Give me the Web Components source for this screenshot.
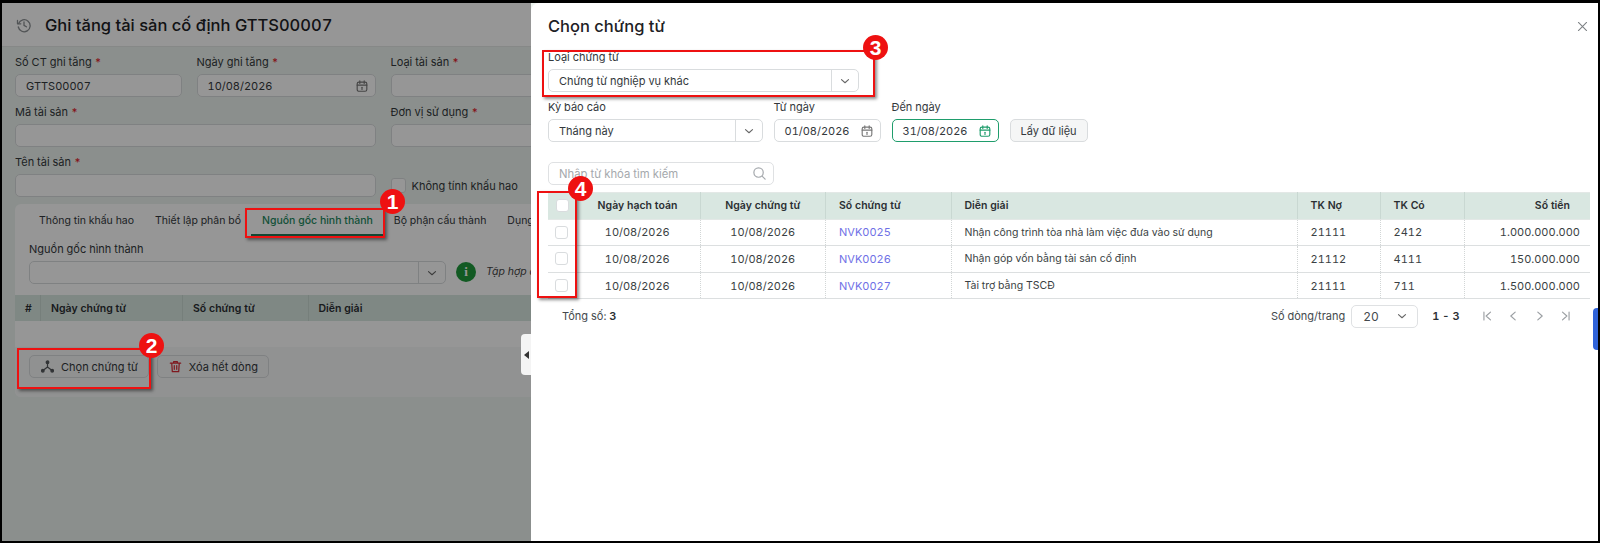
<!DOCTYPE html>
<html lang="vi">
<head>
<meta charset="utf-8">
<title>Ghi tăng tài sản cố định</title>
<style>
  html, body { margin: 0; height: 100%; background: #000; overflow: hidden; }
  body { font: 11px Inter, "Noto Sans", sans-serif; font-variant-numeric: tabular-nums; color: #2b2f33; }
</style>
</head>
<body>
<app-frame>
  <asset-panel></asset-panel>
  <voucher-modal></voucher-modal>
  <mark-box style="left:243px;top:205px;width:136px;height:26px"></mark-box>
  <mark-box style="left:15px;top:345px;width:130px;height:37px"></mark-box>
  <mark-box style="left:540px;top:47px;width:329px;height:43px"></mark-box>
  <mark-box style="left:535px;top:188px;width:36px;height:103px"></mark-box>
  <step-badge style="left:378px;top:186px">1</step-badge>
  <step-badge style="left:137px;top:330px">2</step-badge>
  <step-badge style="left:861px;top:32px">3</step-badge>
  <step-badge style="left:566px;top:173px">4</step-badge>
</app-frame>

<script>
// Shared icons, all drawn on a 16 unit grid.
const icons = {
  calendar: '<rect x="2.5" y="3.5" width="11" height="10.5" rx="2"/><path d="M2.5 7h11M5.5 2v3M10.5 2v3"/><path d="M8 9.5v2.5"/>',
  chevron: '<path d="M4 6.5 8 10l4-3.5"/>',
  search: '<circle cx="7" cy="7" r="5"/><path d="m11 11 3 3"/>',
  close: '<path d="m3 3 10 10M13 3 3 13"/>',
  trash: '<path d="M2.5 4.5h11M6 4.5V2.8h4v1.7M4 4.5l.6 9h6.8l.6-9M6.7 7v4M9.3 7v4"/>',
  nodes: '<circle cx="8" cy="3.5" r="1.4" fill="currentColor"/><circle cx="3" cy="12.5" r="1.4" fill="currentColor"/><circle cx="13" cy="12.5" r="1.4" fill="currentColor"/><path d="M8 4v4.5L3.5 12M8 8.5l4.5 3.5"/>',
  history: '<path d="M2.6 6.5A6 6 0 1 1 2.3 10"/><path d="M1.5 3.5v3.3h3.3"/><path d="M8 4.8v3.6l2.4 1.4"/>',
  first: '<path d="M4.5 3.5v9M12 3.5 7 8l5 4.5"/>',
  prev: '<path d="M10.5 3.5 5.5 8l5 4.5"/>',
  next: '<path d="M5.5 3.5 10.5 8l-5 4.5"/>',
  last: '<path d="M11.5 3.5v9M4 3.5 9 8l-5 4.5"/>'
}

/**
 * Returns the svg markup of a named icon.
 */
const icon = (name, size = 14, color = 'currentColor') =>
  `<svg width="${size}" height="${size}" viewBox="0 0 16 16" fill="none" stroke="${color}" stroke-width="1.3" stroke-linecap="round" stroke-linejoin="round" style="color:${color};flex:none;display:block">${icons[name]}</svg>`

customElements.define('app-frame',
  /**
   * The black outline of the screenshot, everything lies inside it.
   */
  class extends HTMLElement {
    constructor () {
      super()
      this.attachShadow({ mode: 'open' }).innerHTML = `
        <style>
          :host { display: block; position: absolute; inset: 3px 2px 2px 2px; overflow: hidden; background: #edf4f0; }
        </style>
        <slot></slot>
      `
    }
  }
)

customElements.define('mark-box',
  /**
   * A red rectangle drawn over the screenshot.
   */
  class extends HTMLElement {
    constructor () {
      super()
      this.attachShadow({ mode: 'open' }).innerHTML = `
        <style>
          :host { display: block; position: absolute; z-index: 5; border: 2px solid #ee1111; box-shadow: 2px 2px 3px rgba(0,0,0,.45); }
        </style>
      `
    }
  }
)

customElements.define('step-badge',
  /**
   * The numbered red circle next to a mark-box.
   */
  class extends HTMLElement {
    constructor () {
      super()
      this.attachShadow({ mode: 'open' }).innerHTML = `
        <style>
          :host { position: absolute; z-index: 6; display: flex; align-items: center; justify-content: center; width: 25px; height: 25px; border-radius: 50%; background: #ee1111; color: #fff; font: bold 21px "Liberation Sans", sans-serif; }
        </style>
        <slot></slot>
      `
    }
  }
)

customElements.define('form-field',
  /**
   * A label with a text, date or select control under it.
   */
  class extends HTMLElement {
    constructor () {
      super()
      const label = this.getAttribute('label')
      const required = this.hasAttribute('required') ? ' <b>*</b>' : ''
      const kind = this.getAttribute('kind') || 'text'
      const active = this.hasAttribute('active')
      const value = this.getAttribute('value') || ''
      let trail = ''
      if (kind === 'date') trail = `<i class="cal">${icon('calendar', 14, active ? '#1f9d6c' : '#777')}</i>`
      if (kind === 'select') trail = `<i class="sel">${icon('chevron', 14, '#666')}</i>`
      this.attachShadow({ mode: 'open' }).innerHTML = `
        <style>
          :host { display: block; min-width: 0; }
          label { display: block; height: 16px; line-height: 16px; margin-bottom: 4px; white-space: nowrap; color: #33383c; }
          b { color: #e0202c; font-weight: 500; }
          .box { display: flex; align-items: center; height: 23px; box-sizing: border-box; background: #fff; border: 1px solid ${active ? '#1f9d6c' : '#d9dcde'}; border-radius: 5px; }
          span { flex: 1; min-width: 0; padding-left: 10px; white-space: nowrap; overflow: hidden; color: #33383c; }
          i { display: flex; align-items: center; justify-content: center; height: 100%; }
          .cal { padding-right: 6px; }
          .sel { width: 26px; border-left: 1px solid #d9dcde; }
        </style>
        ${label ? `<label>${label}${required}</label>` : ''}
        <div class="box"><span>${value}</span>${trail}</div>
      `
    }
  }
)

customElements.define('plain-button',
  /**
   * A light grey outlined button, the icon goes in the icon slot.
   */
  class extends HTMLElement {
    constructor () {
      super()
      this.attachShadow({ mode: 'open' }).innerHTML = `
        <style>
          :host { display: inline-flex; align-items: center; gap: 6px; height: 23px; box-sizing: border-box; padding: 0 10px; background: #f5f6f6; border: 1px solid #d9dcde; border-radius: 5px; color: #33383c; white-space: nowrap; }
        </style>
        <slot name="icon"></slot><slot></slot>
      `
    }
  }
)

customElements.define('asset-panel',
  /**
   * The dimmed form behind the modal.
   */
  class extends HTMLElement {
    constructor () {
      super()
      this.attachShadow({ mode: 'open' }).innerHTML = `
        <style>
          :host { display: block; position: relative; width: 529px; height: 100%; overflow: hidden; }
          .dim { position: absolute; inset: 0; background: rgba(0,0,0,.41); z-index: 3; }
          header { display: flex; align-items: center; height: 44px; box-sizing: border-box; padding: 1px 0 0 14px; gap: 13px; background: #fff; border-bottom: 1px solid #e4e8e6; color: #777; }
          h1 { margin: 0; font-size: 16.5px; line-height: 24px; font-weight: 500; color: #1d2125; white-space: nowrap; }
          .form { display: grid; grid-template-columns: 167px 179.5px 175px; column-gap: 14.5px; row-gap: 7px; padding: 7px 0 0 13px; width: 600px; }
          .wide { grid-column: span 2; }
          .check { display: flex; align-items: center; gap: 6px; align-self: end; height: 23px; white-space: nowrap; color: #33383c; }
          .tick { width: 13px; height: 13px; border: 1px solid #d9dcde; border-radius: 3px; background: #fff; }
          .card { margin: 7px 0 0 13px; width: 600px; background: #fff; border-radius: 6px; overflow: hidden; }
          nav { display: flex; height: 32px; padding-left: 13.5px; font-size: 10.5px; }
          nav a { display: flex; align-items: center; padding: 0 10.5px; white-space: nowrap; color: #33383c; }
          nav a.on { color: #1f8a5f; font-weight: 500; box-shadow: inset 0 -2px 0 #1f7a55; }
          .source { padding: 5px 0 11px 14px; display: flex; align-items: flex-end; gap: 10px; }
          .source form-field { width: 417px; }
          .info { width: 20px; height: 20px; border-radius: 50%; background: #1f9a3c; color: #fff; display: flex; align-items: center; justify-content: center; font: bold 13px "Liberation Serif", serif; margin-bottom: 2px; }
          em { color: #444; font-size: 10.5px; white-space: nowrap; margin-bottom: 6px; }
          .head { display: grid; grid-template-columns: 26px 142px 125.5px 1fr; height: 26px; background: #d9e7e1; font-weight: 600; font-size: 10.5px; align-items: center; color: #2b2f33; }
          .head div { height: 100%; display: flex; align-items: center; box-sizing: border-box; padding-left: 10px; border-right: 1px solid #c9d8d2; }
          .empty { height: 26px; }
          .foot { display: flex; gap: 8px; padding: 8px 14px 19px; background: #f7f8f8; }
        </style>
        <header>${icon('history', 16, '#8b8f92')}<h1>Ghi tăng tài sản cố định GTTS00007</h1></header>
        <div class="form">
          <form-field label="Số CT ghi tăng" required value="GTTS00007"></form-field>
          <form-field label="Ngày ghi tăng" required kind="date" value="10/08/2026"></form-field>
          <form-field label="Loại tài sản" required></form-field>
          <form-field class="wide" label="Mã tài sản" required></form-field>
          <form-field label="Đơn vị sử dụng" required></form-field>
          <form-field class="wide" label="Tên tài sản" required></form-field>
          <div class="check"><div class="tick"></div>Không tính khấu hao</div>
        </div>
        <div class="card">
          <nav>
            <a>Thông tin khấu hao</a><a>Thiết lập phân bổ</a><a class="on">Nguồn gốc hình thành</a><a>Bộ phận cấu thành</a><a>Dụng cụ</a>
          </nav>
          <div class="source">
            <form-field label="Nguồn gốc hình thành" kind="select"></form-field>
            <div class="info">i</div>
            <em>Tập hợp chứng từ</em>
          </div>
          <div class="head"><div>#</div><div>Ngày chứng từ</div><div>Số chứng từ</div><div>Diễn giải</div></div>
          <div class="empty"></div>
          <div class="foot">
            <plain-button><span slot="icon">${icon('nodes', 15, '#55595c')}</span>Chọn chứng từ</plain-button>
            <plain-button><span slot="icon">${icon('trash', 15, '#d92a35')}</span>Xóa hết dòng</plain-button>
          </div>
        </div>
        <div class="dim"></div>
      `
    }
  }
)

customElements.define('voucher-table',
  /**
   * The table of vouchers, with its rows built from a list.
   */
  class extends HTMLElement {
    constructor () {
      super()
      const rows = [
        ['10/08/2026', '10/08/2026', 'NVK0025', 'Nhận công trình tòa nhà làm việc đưa vào sử dụng', '21111', '2412', '1.000.000.000'],
        ['10/08/2026', '10/08/2026', 'NVK0026', 'Nhận góp vốn bằng tài sản cố định', '21112', '4111', '150.000.000'],
        ['10/08/2026', '10/08/2026', 'NVK0027', 'Tài trợ bằng TSCĐ', '21111', '711', '1.500.000.000']
      ]
      const body = rows.map(r => `
        <tr>
          <td class="c"><u></u></td>
          <td class="m">${r[0]}</td><td class="m">${r[1]}</td>
          <td class="n"><a>${r[2]}</a></td><td>${r[3]}</td><td class="n">${r[4]}</td><td class="n">${r[5]}</td>
          <td class="r n">${r[6]}</td>
        </tr>`).join('')
      this.attachShadow({ mode: 'open' }).innerHTML = `
        <style>
          :host { display: block; }
          table { border-collapse: collapse; table-layout: fixed; width: 1042px; font-size: 10.5px; }
          th, td { height: 26.6px; padding: 0 13px; box-sizing: border-box; text-align: left; white-space: nowrap; }
          th { background: #d9e7e1; font-weight: 600; color: #2b2f33; border-right: 1px solid #c9d8d2; border-top: 1px solid #e3e8e6; border-bottom: 1px solid #e3e8e6; }
          th:last-child, td:last-child { border-right: 0; }
          td { color: #3a3f43; border-bottom: 1px solid #dcdfe0; border-right: 1px dotted #d2d6d6; }
          .m, .n { font-size: 11px; }
          .m { text-align: center; }
          th.m { font-size: 10.5px; }
          th.r { text-align: right; padding-right: 20px; }
          td.r { text-align: right; padding-right: 10px; }
          .c { padding: 0 0 0 7px; }
          td.c { border-right: 0; }
          u { display: block; width: 13px; height: 13px; box-sizing: border-box; border: 1px solid #d9dcde; border-radius: 3px; background: #fff; }
          th u { margin-left: 1px; }
          a { color: #6f70e6; }
        </style>
        <table>
          <colgroup>
            <col style="width:27px"><col style="width:125px"><col style="width:125.5px"><col style="width:125.5px">
            <col style="width:346px"><col style="width:83px"><col style="width:84px"><col style="width:126px">
          </colgroup>
          <thead><tr>
            <th class="c"><u></u></th><th class="m">Ngày hạch toán</th><th class="m">Ngày chứng từ</th><th>Số chứng từ</th>
            <th>Diễn giải</th><th>TK Nợ</th><th>TK Có</th><th class="r">Số tiền</th>
          </tr></thead>
          <tbody>${body}</tbody>
        </table>
      `
    }
  }
)

customElements.define('voucher-modal',
  /**
   * The white drawer that lies over the right side of the form.
   */
  class extends HTMLElement {
    constructor () {
      super()
      this.attachShadow({ mode: 'open' }).innerHTML = `
        <style>
          :host { display: block; position: absolute; z-index: 4; top: 0; bottom: 0; left: 529px; right: 0; background: #fff; border-top-left-radius: 8px; box-sizing: border-box; padding: 0 7px 0 17px; }
          .handle { position: absolute; left: -10px; top: 331px; width: 10px; height: 41px; background: #f4f4f4; border-radius: 4px 0 0 4px; display: flex; align-items: center; justify-content: center; }
          .handle::before { content: ""; border: 4px solid transparent; border-right: 5px solid #333; border-left: 0; }
          .blue { position: absolute; right: 0; top: 305px; width: 5px; height: 42px; background: #2f62d8; border-radius: 4px 0 0 4px; }
          .title { display: flex; align-items: center; justify-content: space-between; height: 46px; padding-right: 2px; }
          h2 { margin: 0; font-size: 16.5px; font-weight: 500; color: #1d2125; }
          .one { width: 311px; }
          .row { display: flex; align-items: flex-end; margin-top: 7px; gap: 10.5px; }
          .row .period { width: 215px; }
          .row .date { width: 107.5px; }
          .search { display: flex; align-items: center; justify-content: space-between; box-sizing: border-box; width: 226px; height: 23px; margin-top: 20px; padding: 0 6px 0 10px; border: 1px solid #dfe1e3; border-radius: 5px; color: #a5a9ad; font-size: 11.3px; }
          voucher-table { margin-top: 7px; }
          .foot { display: flex; align-items: center; height: 34px; padding-left: 14px; color: #44494d; }
          .foot b { font-weight: 600; color: #2b2f33; }
          .grow { flex: 1; }
          .size { display: flex; align-items: center; justify-content: space-between; box-sizing: border-box; width: 67px; height: 23px; margin: 0 14px 0 6px; padding: 0 8px 0 11px; border: 1px solid #dfe1e3; border-radius: 5px; font-size: 12px; }
          .pages { display: flex; gap: 12.5px; margin-left: 20px; padding-right: 18px; }
        </style>
        <div class="handle"></div>
        <div class="blue"></div>
        <div class="title"><h2>Chọn chứng từ</h2><span>${icon('close', 13, '#7c8084')}</span></div>
        <form-field class="one" label="Loại chứng từ" kind="select" value="Chứng từ nghiệp vụ khác"></form-field>
        <div class="row">
          <form-field class="period" label="Kỳ báo cáo" kind="select" value="Tháng này"></form-field>
          <form-field class="date" label="Từ ngày" kind="date" value="01/08/2026"></form-field>
          <form-field class="date" label="Đến ngày" kind="date" active value="31/08/2026"></form-field>
          <plain-button>Lấy dữ liệu</plain-button>
        </div>
        <div class="search">Nhập từ khóa tìm kiếm${icon('search', 15, '#a5a9ad')}</div>
        <voucher-table></voucher-table>
        <div class="foot">
          <span>Tổng số: <b>3</b></span>
          <span class="grow"></span>
          <span>Số dòng/trang</span>
          <div class="size">20${icon('chevron', 14, '#666')}</div>
          <b>1 - 3</b>
          <div class="pages">${icon('first', 14, '#9a9ea2')}${icon('prev', 14, '#9a9ea2')}${icon('next', 14, '#9a9ea2')}${icon('last', 14, '#9a9ea2')}</div>
        </div>
      `
    }
  }
)
</script>
</body>
</html>
